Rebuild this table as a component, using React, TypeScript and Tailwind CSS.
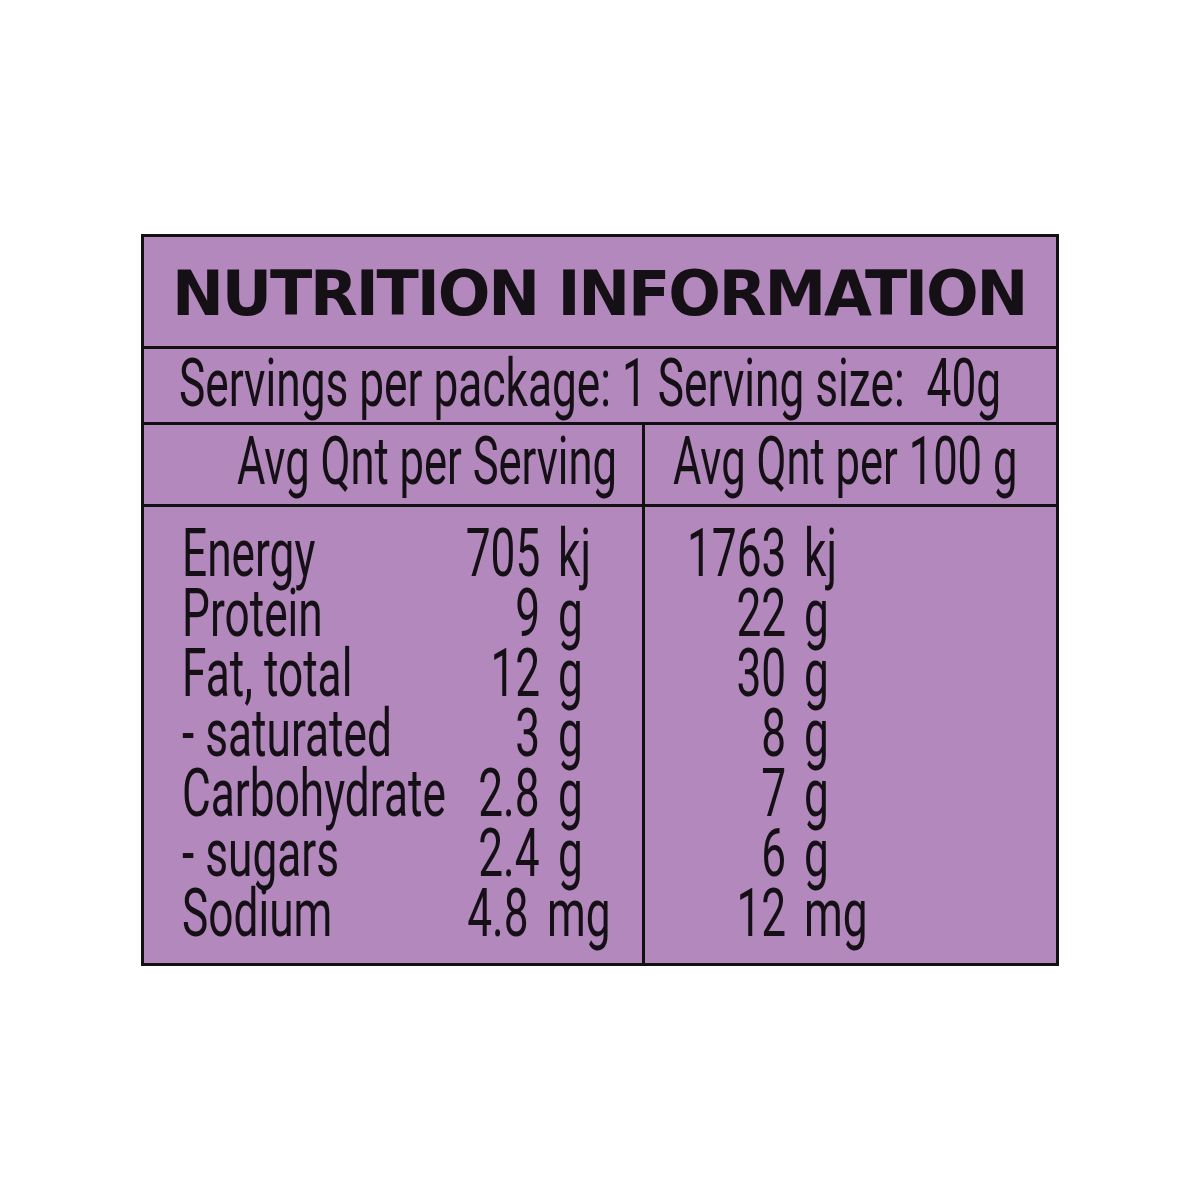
import React from 'react';

type Row = [string, string, string, string, string];

const rows: Row[] = [
  ['Energy', '705', 'kj', '1763', 'kj'],
  ['Protein', '9', 'g', '22', 'g'],
  ['Fat, total', '12', 'g', '30', 'g'],
  ['- saturated', '3', 'g', '8', 'g'],
  ['Carbohydrate', '2.8', 'g', '7', 'g'],
  ['- sugars', '2.4', 'g', '6', 'g'],
  ['Sodium', '4.8', 'mg', '12', 'mg'],
];

// condensed look: regular face squeezed horizontally
const Sq: React.FC<{ children: React.ReactNode; right?: boolean; tight?: boolean }> = ({
  children,
  right,
  tight,
}) => (
  <span
    className={`inline-block whitespace-pre ${tight ? 'scale-x-[0.66]' : 'scale-x-[0.67]'} ${
      right ? 'origin-right' : 'origin-left'
    }`}
  >
    {children}
  </span>
);

const App: React.FC = () => {
  return (
    <div className="w-full h-[1200px] bg-white overflow-hidden pt-[234px] pl-[141px]">
      <div className="w-[918px] border-[3px] border-[#111] bg-[#b388bc] text-[#151015] font-['Roboto',sans-serif] text-[66px] leading-[60px]">
        {/* Title */}
        <div className="h-[112px] border-b-[3px] border-[#111] pt-[26px] pl-[28px]">
          <span className="font-['DejaVu_Sans',sans-serif] font-bold text-[62px] leading-[60px] tracking-[-2.15px] whitespace-nowrap">
            NUTRITION INFORMATION
          </span>
        </div>

        {/* Servings */}
        <div className="h-[76px] border-b-[3px] border-[#111] pt-[5px] pl-[35px] whitespace-nowrap">
          <Sq>Servings per package: 1 Serving size:  40g</Sq>
        </div>

        {/* Column headings */}
        <div className="flex h-[82px] border-b-[3px] border-[#111]">
          <div className="w-[501px] border-r-[3px] border-[#111] pt-[7px] pl-[93px] whitespace-nowrap">
            <Sq tight>Avg Qnt per Serving</Sq>
          </div>
          <div className="flex-1 pt-[7px] pl-[28px] whitespace-nowrap">
            <Sq tight>Avg Qnt per 100 g</Sq>
          </div>
        </div>

        {/* Values */}
        <div className="flex h-[456px]">
          <div className="w-[501px] border-r-[3px] border-[#111] pt-[17px] pl-[38px]">
            {rows.map((r) => (
              <div key={r[0]} className="flex h-[60px]">
                <div className="w-[201px] whitespace-nowrap">
                  <Sq>{r[0]}</Sq>
                </div>
                <div className="w-[157px] flex justify-end whitespace-nowrap">
                  <Sq right>{r[1]}</Sq>
                </div>
                <div className="ml-[18px] whitespace-nowrap">
                  <Sq>{r[2]}</Sq>
                </div>
              </div>
            ))}
          </div>
          <div className="flex-1 pt-[17px]">
            {rows.map((r) => (
              <div key={r[0]} className="flex h-[60px]">
                <div className="w-[141px] flex justify-end whitespace-nowrap">
                  <Sq right>{r[3]}</Sq>
                </div>
                <div className="ml-[18px] whitespace-nowrap">
                  <Sq>{r[4]}</Sq>
                </div>
              </div>
            ))}
          </div>
        </div>
      </div>
    </div>
  );
};

export default App;
